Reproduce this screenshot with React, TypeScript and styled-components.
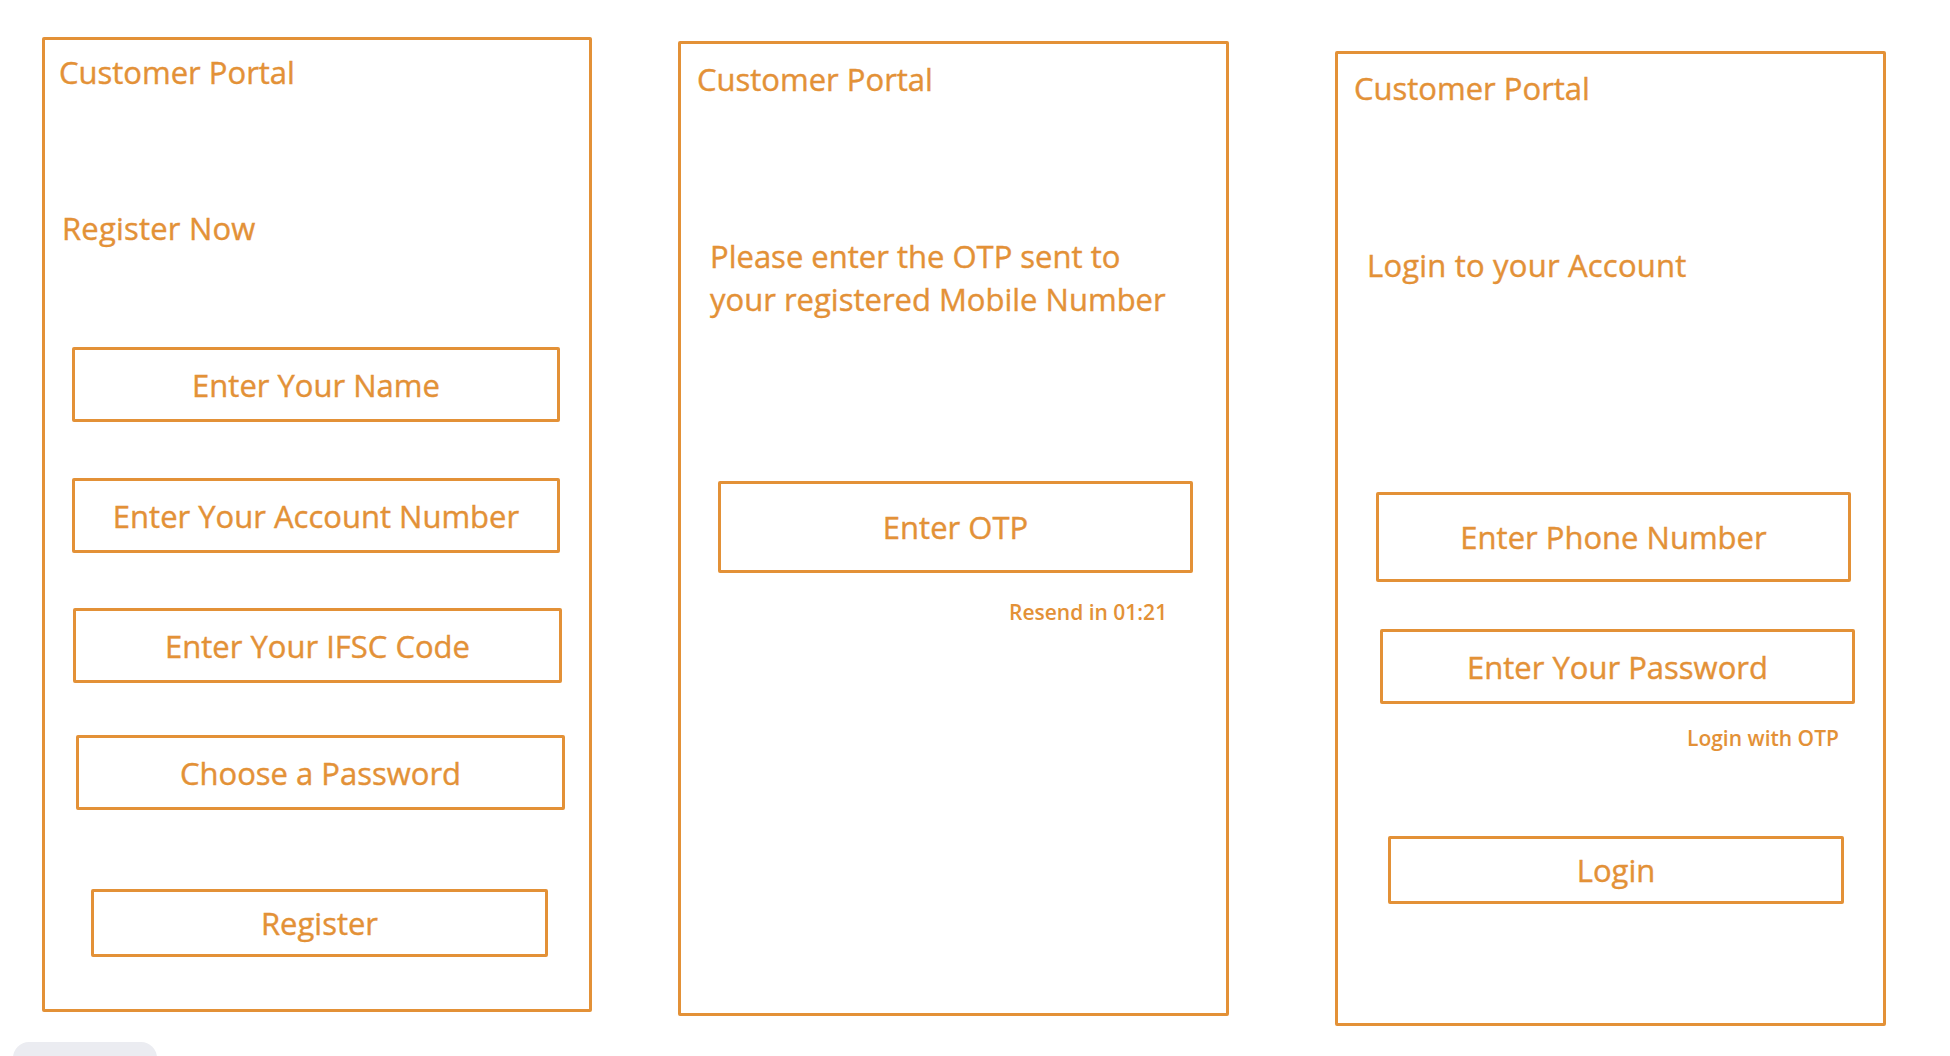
import styled, { createGlobalStyle } from "styled-components";

const GlobalStyle = createGlobalStyle`
  * {
    box-sizing: border-box;
  }
  body {
    margin: 0;
    background: #ffffff;
    font-family: "Open Sans", "Noto Sans", sans-serif;
    color: #e39137;
    overflow: hidden;
  }
`;

type Place = { $mt?: number; $ml?: number };
type Box = Place & { $w: number; $h: number };

const App = () => {
  return (
    <>
      <GlobalStyle />
      <Page>
        <Card $mt={37} $ml={42} $w={550} $h={975}>
          <Title $mt={12} $ml={14}>Customer Portal</Title>
          <Heading $mt={116} $ml={17}>Register Now</Heading>
          <Field $mt={99} $ml={27} $w={488} $h={75}>Enter Your Name</Field>
          <Field $mt={56} $ml={27} $w={488} $h={75}>Enter Your Account Number</Field>
          <Field $mt={55} $ml={28} $w={489} $h={75}>Enter Your IFSC Code</Field>
          <Field $mt={52} $ml={31} $w={489} $h={75}>Choose a Password</Field>
          <Field $mt={79} $ml={46} $w={457} $h={68}>Register</Field>
        </Card>

        <Card $mt={41} $ml={86} $w={551} $h={975}>
          <Title $mt={15} $ml={16}>Customer Portal</Title>
          <Paragraph $mt={136} $ml={29}>
            Please enter the OTP sent to
            <br />
            your registered Mobile Number
          </Paragraph>
          <Field $mt={160} $ml={37} $w={475} $h={92}>Enter OTP</Field>
          <Hint $mt={27} $ml={328}>Resend in 01:21</Hint>
        </Card>

        <Card $mt={51} $ml={106} $w={551} $h={975}>
          <Title $mt={14} $ml={16}>Customer Portal</Title>
          <Heading $mt={137} $ml={29}>Login to your Account</Heading>
          <Field $mt={207} $ml={38} $w={475} $h={90}>Enter Phone Number</Field>
          <Field $mt={47} $ml={42} $w={475} $h={75}>Enter Your Password</Field>
          <Hint $mt={22} $ml={349}>Login with OTP</Hint>
          <Field $mt={86} $ml={50} $w={456} $h={68}>Login</Field>
        </Card>
      </Page>
      <Badge />
    </>
  );
};

export default App;

const Page = styled.div`
  display: flex;
  align-items: flex-start;
  width: 100vw;
  height: 100vh;
`;

const Card = styled.div<Box>`
  display: flex;
  flex-direction: column;
  align-items: flex-start;
  flex-shrink: 0;
  margin-top: ${(p) => p.$mt ?? 0}px;
  margin-left: ${(p) => p.$ml ?? 0}px;
  width: ${(p) => p.$w}px;
  height: ${(p) => p.$h}px;
  border: 3px solid #e39137;
  border-radius: 2px;
`;

const Title = styled.div<Place>`
  margin-top: ${(p) => p.$mt ?? 0}px;
  margin-left: ${(p) => p.$ml ?? 0}px;
  font-size: 31px;
  line-height: 40px;
  white-space: nowrap;
  -webkit-text-stroke: 0.4px currentColor;
`;

const Heading = styled(Title)`
  letter-spacing: 0.2px;
`;

const Paragraph = styled.div<Place>`
  margin-top: ${(p) => p.$mt ?? 0}px;
  margin-left: ${(p) => p.$ml ?? 0}px;
  font-size: 31px;
  line-height: 43px;
  white-space: nowrap;
  -webkit-text-stroke: 0.4px currentColor;
`;

const Field = styled.div<Box>`
  display: flex;
  align-items: center;
  justify-content: center;
  flex-shrink: 0;
  margin-top: ${(p) => p.$mt ?? 0}px;
  margin-left: ${(p) => p.$ml ?? 0}px;
  width: ${(p) => p.$w}px;
  height: ${(p) => p.$h}px;
  border: 3px solid #e39137;
  border-radius: 2px;
  font-size: 31px;
  white-space: nowrap;
  -webkit-text-stroke: 0.4px currentColor;
`;

const Hint = styled.div<Place>`
  margin-top: ${(p) => p.$mt ?? 0}px;
  margin-left: ${(p) => p.$ml ?? 0}px;
  font-size: 21px;
  font-weight: 600;
  line-height: 24px;
  white-space: nowrap;
`;

const Badge = styled.div`
  position: fixed;
  left: 13px;
  bottom: -20px;
  width: 144px;
  height: 34px;
  border-radius: 16px;
  background: #ebecf1;
`;
